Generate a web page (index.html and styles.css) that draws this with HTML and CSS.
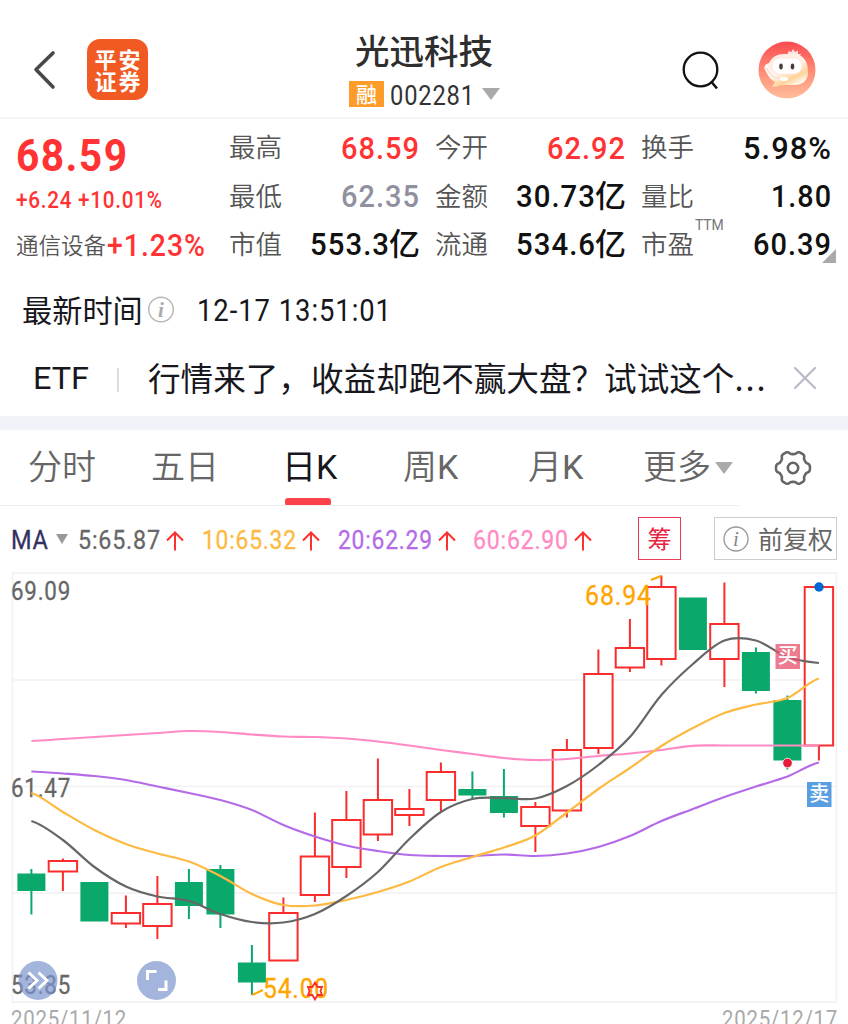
FILE: index.html
```html
<!DOCTYPE html>
<html lang="zh-CN">
<head>
<meta charset="utf-8">
<title>光迅科技 002281</title>
<link rel="stylesheet" href="styles.css">
</head>
<body>
<header class="header">
  <svg class="back" width="24" height="40" viewBox="0 0 24 40"><path d="M21 3L4 19.500L21 37" fill="none" stroke="#484848" stroke-width="3.600" stroke-linecap="round" stroke-linejoin="round"/></svg>
  <div class="logo"><span>平安</span><span>证券</span></div>
  <div class="title">
    <h1>光迅科技</h1>
    <div class="code"><span class="badge"><span>融</span></span><span class="num code-num" data-w="84">002281</span><i class="caret"></i></div>
  </div>
  <svg class="search" width="40" height="42" viewBox="0 0 40 42"><circle cx="18.500" cy="18.500" r="16.800" fill="none" stroke="#111" stroke-width="2.300"/><path d="M29.500 31L35 37.500" stroke="#111" stroke-width="2.600"/></svg>
  <svg class="avatar" width="58" height="58" viewBox="0 0 58 58">
    <defs>
      <linearGradient id="av" x1="0" y1="0" x2="0" y2="1"><stop offset="0" stop-color="#fa4a50"/><stop offset=".55" stop-color="#ff9078"/><stop offset="1" stop-color="#ffbd9c"/></linearGradient>
      <linearGradient id="face" x1="0" y1="0" x2=".7" y2="1"><stop offset="0" stop-color="#ffe9e2"/><stop offset=".55" stop-color="#fff3ea"/><stop offset=".8" stop-color="#ffd399"/><stop offset="1" stop-color="#fff"/></linearGradient>
    </defs>
    <circle cx="29" cy="29" r="28.500" fill="url(#av)"/>
    <path d="M29 14L31 10L33.500 11L35 8L37 11L40 9.500L40 13L43 13L41 17Z" fill="#ffe4dc"/>
    <path d="M26 13H35C45 13 50 20 50 31C50 40 44 44 36 44H27C22 44 19 46 14 46L17 41C11 38 9 32 7 29C5 25 8 23 11 22C14 16 19 13 26 13Z" fill="url(#face)"/>
    <rect x="14" y="17" width="30" height="16" rx="8" fill="#fff" stroke="#ffe3db" stroke-width=".8"/>
    <path d="M9 24C8 31 14 37 23 38" fill="none" stroke="#fff" stroke-width="2.200"/>
    <path d="M9 27C10 33 16 37 22 38" fill="none" stroke="#f8b3a1" stroke-width=".8"/>
    <ellipse cx="26" cy="38" rx="4" ry="2" fill="#fff"/>
    <ellipse cx="23" cy="25.500" rx="1.800" ry="2.900" fill="#4a3c35"/><ellipse cx="34.500" cy="25.500" rx="1.800" ry="2.900" fill="#4a3c35"/>
  </svg>
</header>

<section class="quote">
  <div class="price">
    <div class="last num" data-w="111">68.59</div>
    <div class="change num" data-w="146">+6.24 +10.01%</div>
    <div class="sector"><span>通信设备</span><b class="num" data-w="98">+1.23%</b></div>
  </div>
  <dl class="stats">
    <div><dt>最高</dt><dd class="num red" data-w="78">68.59</dd></div>
    <div><dt>今开</dt><dd class="num red" data-w="78">62.92</dd></div>
    <div><dt>换手</dt><dd class="num" data-w="88">5.98%</dd></div>
    <div><dt>最低</dt><dd class="num gray" data-w="78">62.35</dd></div>
    <div><dt>金额</dt><dd><span class="num" data-w="79">30.73</span><em>亿</em></dd></div>
    <div><dt>量比</dt><dd class="num" data-w="60">1.80</dd></div>
    <div><dt>市值</dt><dd><span class="num" data-w="79">553.3</span><em>亿</em></dd></div>
    <div><dt>流通</dt><dd><span class="num" data-w="79">534.6</span><em>亿</em></dd></div>
    <div><dt>市盈<sup>TTM</sup></dt><dd class="num" data-w="78">60.39</dd></div>
  </dl>
  <i class="corner"></i>
</section>

<section class="time">
  <span class="time-label">最新时间</span>
  <svg width="28" height="28" viewBox="0 0 28 28"><circle cx="14" cy="13.500" r="12.300" fill="none" stroke="#b5b5b5" stroke-width="1.400"/><text x="14" y="20.500" class="info">i</text></svg>
  <span class="num time-num" data-w="194">12-17 13:51:01</span>
</section>

<section class="promo">
  <span class="num etf" data-w="56">ETF</span><i class="bar"></i>
  <span class="promo-text">行情来了，收益却跑不赢大盘？试试这个<span class="dots">...</span></span>
  <svg width="24" height="24" viewBox="0 0 24 24"><path d="M2 2L22 22M22 2L2 22" stroke="#b9b9c8" stroke-width="2.200" stroke-linecap="round"/></svg>
</section>

<nav class="tabs">
  <span class="tab t1">分时</span><span class="tab t2">五日</span><span class="tab t3 on">日<b>K</b></span><span class="tab t4">周<b>K</b></span><span class="tab t5">月<b>K</b></span><span class="tab t6">更多<i class="caret"></i></span>
  <svg class="gear" width="38" height="38" viewBox="-19 -19 38 38"><path id="gear" fill="none" stroke="#666" stroke-width="2.600" stroke-linejoin="round"/><circle r="5.200" fill="none" stroke="#666" stroke-width="2.600"/></svg>
</nav>

<section class="ma">
  <b class="num ma-name" data-w="37">MA</b><i class="caret small"></i>
  <span class="num m5" data-w="82">5:65.87</span><svg class="up" width="18" height="20" viewBox="0 0 18 20"><path d="M9 19.500V2M1 9.500L9 1.500L17 9.500"/></svg>
  <span class="num m10" data-w="94">10:65.32</span><svg class="up" width="18" height="20" viewBox="0 0 18 20"><path d="M9 19.500V2M1 9.500L9 1.500L17 9.500"/></svg>
  <span class="num m20" data-w="94">20:62.29</span><svg class="up" width="18" height="20" viewBox="0 0 18 20"><path d="M9 19.500V2M1 9.500L9 1.500L17 9.500"/></svg>
  <span class="num m60" data-w="95">60:62.90</span><svg class="up" width="18" height="20" viewBox="0 0 18 20"><path d="M9 19.500V2M1 9.500L9 1.500L17 9.500"/></svg>
  <span class="chip">筹</span>
  <span class="adjust"><svg width="28" height="28" viewBox="0 0 28 28"><circle cx="14" cy="14" r="12" fill="none" stroke="#999" stroke-width="1.300"/><text x="14" y="20.500" class="info dark">i</text></svg>前复权</span>
</section>

<svg class="chart" width="848" height="452" viewBox="0 572 848 452">
  <path class="grid" d="M12.500 573H836.500V1002H12.500ZM12.500 680H836.500M12.500 786.500H836.500M12.500 893H836.500"/>
  <g class="axis num"><text x="11" y="600" textLength="60">69.09</text><text x="11" y="797" textLength="60">61.47</text><text x="11" y="994" textLength="60">53.85</text></g>
  <g id="candles"></g>
  <g class="peak num"><text x="585" y="604.500" textLength="67">68.94</text><text x="263" y="997.500" textLength="66">54.00</text></g>
  <path d="M651 580L661 576M252 995L263 990" stroke="#ffa500" stroke-width="2"/>
  <g id="lines"></g>
  <path d="M315 982.500L317.600 987L322 987L320.500 991L322 995L317.600 995L315 999.500L312.400 995L308 995L309.500 991L308 987L312.400 987Z" fill="none" stroke="#fa2d2d" stroke-width="1.800"/>
  <circle cx="819" cy="587" r="4.700" fill="#0066d6"/>
  <circle cx="787.500" cy="763" r="4.800" fill="#e51d3c" stroke="#fff" stroke-width=".8"/>
  <rect x="775.500" y="644" width="24.500" height="25" fill="#e8506b" fill-opacity=".75"/><text class="mark" x="787.700" y="663">买</text>
  <rect x="807" y="782" width="24.500" height="25" fill="#5a9ee2"/><text class="mark" x="819.200" y="801">卖</text>
  <g fill="#7d96cf" fill-opacity=".7"><circle cx="38" cy="980.500" r="19.500"/><circle cx="156.500" cy="980.500" r="19.500"/></g>
  <path d="M28.500 972.500L37 980.500L28.500 988.500M38.500 972.500L47 980.500L38.500 988.500M147.500 980V971.500H156.500M158 989.500H166V980.500" fill="none" stroke="#fff" stroke-width="3"/>
  <g class="dates num"><text x="11" y="1027" textLength="116">2025/11/12</text><text x="722" y="1027" textLength="116">2025/12/17</text></g>
</svg>
<script src="script.js"></script>
</body>
</html>
```
FILE: styles.css
```css
* { box-sizing: border-box; }
html, body { margin: 0; height: 1024px; overflow: hidden; }
body { width: 848px; background: #fff; color: #111; font-family: "Noto Sans CJK SC", sans-serif; font-weight: 350; }
i, em { font-style: normal; }
.num { font-family: Roboto, "Noto Sans CJK SC", sans-serif; font-weight: 500; white-space: nowrap; letter-spacing: .035em; }
[data-w] { display: inline-block; transform-origin: 0 50%; }
.caret { display: block; width: 0; border: 9px solid transparent; border-top: 12px solid #aaa; border-bottom: 0; }

.header { height: 119px; border-bottom: 2px solid #f6f6f6; display: flex; align-items: flex-start; padding-left: 32px; }
.back { margin-top: 50px; }
.logo { margin: 39px 0 0 31px; width: 61px; height: 61px; border-radius: 13px; background: #f15a22; color: #fff; font-weight: 700; font-size: 22px; line-height: 22px; padding-top: 8px; display: flex; flex-direction: column; align-items: center; }
.logo span { letter-spacing: 2px; margin-right: -2px; }
.title { width: 152px; margin-left: 201px; }
.title h1 { margin: 28px 0 0 6px; font-size: 34.500px; line-height: 42px; font-weight: 500; color: #2e2e2e; white-space: nowrap; }
.code { display: flex; align-items: center; margin-top: 11px; height: 26px; }
.badge { width: 35px; height: 26px; background: #ff9b28; color: #fff; font-size: 21px; line-height: 24px; text-align: center; font-weight: 500; }
.code-num { margin-left: 6px; font-size: 27px; font-weight: 400; color: #333; line-height: 26px; position: relative; top: 2px; }
.code .caret { margin-left: 8px; }
.search { margin: 51px 0 0 181px; }
.avatar { margin: 41px 0 0 36px; }

.quote { height: 151px; display: flex; position: relative; padding-left: 16px; }
.price { width: 213px; color: #ff3333; display: flex; flex-direction: column; align-items: flex-start; }
.last { margin-top: 11px; font-size: 45px; line-height: 52px; font-weight: 700; }
.change { margin-top: 4px; font-size: 23px; line-height: 30px; }
.sector { display: flex; align-items: center; height: 34px; margin-top: 13px; font-size: 22.500px; color: #555; line-height: 30px; }
.sector span { margin: -4px 1px 0 0; }
.sector .num { font-size: 31px; color: #ff3333; font-weight: 500; }
.stats { margin: 4px 0 0; display: grid; grid-template-columns: 190px 190px 190px; column-gap: 16px; grid-template-rows: 49px 48px 48px; }
.stats > div { display: flex; justify-content: space-between; align-items: center; }
.stats dt { font-size: 26.500px; line-height: 48px; color: #555; position: relative; margin-top: -3px; }
.stats sup { position: absolute; left: 54px; top: -9px; font: 400 14px/30px Roboto, sans-serif; letter-spacing: -.2px; color: #777; }
.stats dd { margin: 0; font-size: 32px; line-height: 48px; display: flex; }
.stats em { font-size: 31px; font-weight: 500; line-height: 44px; margin-right: -1px; }
.red { color: #ff3333; }
.gray { color: #9090a0; }
.corner { position: absolute; left: 822px; top: 130px; border: 7.500px solid #aaa; border-top-color: transparent; border-left-color: transparent; }

.time { height: 80px; display: flex; align-items: center; padding-left: 22px; color: #17171d; }
.time-label { font-size: 30.200px; font-weight: 400; margin-top: -3px; }
.time svg { margin-left: 4px; }
.info { font: italic 700 21px "Liberation Serif", serif; fill: #aaa; text-anchor: middle; }
.info.dark { fill: #888; font-weight: 400; }
.time-num { margin-left: 22px; font-size: 31px; font-weight: 400; }
.promo { height: 66px; display: flex; align-items: center; padding: 0 0 10px 33px; color: #17171d; }
.etf { font-size: 32px; font-weight: 400; letter-spacing: 0; }
.bar { width: 2px; height: 24px; margin: 4px 0 0 28px; background: #ddd; }
.promo-text { margin: -4px 0 0 29px; font-size: 32.600px; font-weight: 400; white-space: nowrap; width: 620px; }
.dots { letter-spacing: 2px; }
.promo svg { margin-left: 25px; margin-top: -1px; }

.tabs { height: 90px; border-top: 14px solid #f2f3f8; display: flex; align-items: flex-start; color: #666; position: relative; }
.tabs::after { content: ""; position: absolute; left: 0; bottom: 0; width: 739px; height: 1px; background: #eee; }
.tab { font-size: 34px; line-height: 70px; height: 76px; display: flex; font-weight: 350; }
.tab b { font: 400 34px/74px Roboto, sans-serif; }
.t1 { margin-left: 28px; width: 123px; } .t2 { width: 131px; } .t3 { width: 121px; } .t4 { width: 125px; } .t5 { width: 115px; } .t6 { width: 131px; }
.tab .caret { margin: 32px 0 0 4px; }
.on { color: #17171d; position: relative; font-weight: 400; }
.on::after { content: ""; position: absolute; left: 3px; bottom: 0; width: 46px; height: 8px; border-radius: 3px; background: #fa4248; }
.gear { margin-top: 19px; }

.ma { height: 66px; display: flex; align-items: center; padding: 0 0 0 11px; font-size: 26px; }
.ma-name { color: #34305f; font-weight: 500; }
.ma .num { position: relative; top: 1px; font-weight: 400; -webkit-text-stroke: .3px; }
.small { margin: 0 0 0 8px; border: 6.500px solid transparent; border-top: 10px solid #999; border-bottom: 0; }
.m5 { margin-left: 10px; color: #666; }
.m10 { margin-left: 18px; color: #fdb940; }
.m20 { margin-left: 18px; color: #b46be8; }
.m60 { margin-left: 17px; color: #ff8ac4; }
.up { margin: 4px 0 0 6px; fill: none; stroke: #ff3030; stroke-width: 2; flex: none; }
.chip { margin: -1px 0 0 46px; width: 43px; height: 43px; border: 1px solid #ea3a57; color: #e8213f; font-size: 24px; line-height: 40px; text-align: center; font-weight: 400; flex: none; }
.adjust { margin: -1px 0 0 33px; width: 123px; height: 43px; border: 1px solid #ccc; display: flex; align-items: center; font-size: 25px; line-height: 39px; font-weight: 400; color: #666; padding-left: 7px; white-space: nowrap; flex: none; }
.adjust svg { margin-right: 8px; flex: none; }

.chart { display: block; }
.grid { fill: none; stroke: #f1f1f3; stroke-width: 1.600; }
.chart .num { font-weight: 400; }
.axis { font-size: 25px; fill: #666; stroke: #666; stroke-width: .3px; }
.peak { font-size: 27px; fill: #ffa500; stroke: #ffa500; stroke-width: .3px; }
.dates { font-size: 24px; fill: #aaa; }
.mark { font-size: 20px; font-weight: 500; fill: #fff; text-anchor: middle; }
.rise { fill: #fff; stroke: #fa2d2d; stroke-width: 2; }
.fall { fill: #0aa86b; stroke: #0aa86b; stroke-width: 2; }
.avg { fill: none; stroke-width: 2.200; }
```
FILE: script.js
```js
// Narrow, spaced numerals: scale each run horizontally to its column width,
// leaving the trailing letter-space outside the measured width.
document.querySelectorAll('[data-w]').forEach(function (el) {
  var natural = el.getBoundingClientRect().width, w = +el.dataset.w;
  var trail = parseFloat(getComputedStyle(el).letterSpacing) || 0;
  el.style.transform = 'scaleX(' + w / (natural - trail) + ')';
  el.style.marginRight = (w - natural) + 'px';
});
document.querySelectorAll('text[textLength]').forEach(function (t) {
  t.setAttribute('lengthAdjust', 'spacingAndGlyphs');
});

// Settings gear outline with six soft teeth.
var g = [];
for (var a = 0; a < 360; a += 3) {
  var r = 15.4 + 1.6 * Math.tanh(2 * (Math.cos(a * Math.PI / 30) + 0.15)), q = a * Math.PI / 180;
  g.push((r * Math.cos(q)).toFixed(2) + ' ' + (r * Math.sin(q)).toFixed(2));
}
document.getElementById('gear').setAttribute('d', 'M' + g.join('L') + 'Z');

// type, high, body top, body bottom, low
var candles = [
  ['f',869,873.5,891,914.5],['r',858.5,860,872.5,891],['f',882,882,921.5,921.5],['r',895.5,912,924.5,928],
  ['r',876,903,927,939],['f',869,882,906,919],['f',865,869,914.5,928],['f',945,962.5,982.5,995],
  ['r',897.5,912,961.5,961.5],['r',812.5,855.5,896,902],['r',791,819,868,878],['r',758.5,799,835.5,841],
  ['r',789,808,816,826],['r',762.5,771,801,812],['f',771.5,789,795.5,799],['f',769,796,813,817.5],
  ['r',802,806,827,852],['r',739,749,811.5,817.5],['r',649.5,673,749,754],['r',619,647,668.5,672],
  ['r',575.5,586,660,665.5],['f',597.5,597.5,650,650],['r',582.5,623,660,687],['f',647.5,652,691,693.5],
  ['f',695.5,700,760.5,769.5],['r',586,586,746.5,760.5]
];
var X = function (i) { return 31.4 + 31.5 * i; };
document.getElementById('candles').innerHTML = candles.map(function (c, i) {
  var x = X(i), h = c[0] === 'r' ? 14.2 : 13;
  return '<path class="' + (c[0] === 'r' ? 'rise' : 'fall') + '" d="M' + x + ' ' + c[1] + 'V' + c[2] + 'M' + x + ' ' + c[3] + 'V' + c[4] +
    'M' + (x - h) + ' ' + (c[2] + 1) + 'H' + (x + h) + 'V' + (c[3] - 1) + 'H' + (x - h) + 'Z"/>';
}).join('');

var averages = {
  '#ff8ac4': [741,739,737,735,733,731,732,734.5,736.5,737,738.5,741.5,745.5,750,754,758,760,759,756,753.5,750,745.8,745.5,745.5,745.5,745.5],
  '#b46be8': [771.5,773.5,776,780,786.5,793,800,810,825,836.5,845.5,851,855,856,856,854.5,856,853.5,847,836,821,809,797,786.5,776.5,762.5],
  '#fdb940': [793,812,830,844,853.5,861.5,876,894,905,905.5,900,892,881.5,867,857,847.5,835.5,812.5,789,768,746,728,713,704.5,698,678.5],
  '#666': [821,840,867,886.5,896.5,901,914,922,922.5,914,896,872,839,812,799,798,798.5,786,765,737,695,664,640.5,640.5,657,663]
};
document.getElementById('lines').innerHTML = Object.keys(averages).map(function (k) {
  var p = averages[k], n = p.length, d = 'M' + X(0) + ' ' + p[0];
  for (var i = 0; i < n - 1; i++) {
    var y0 = p[Math.max(0, i - 1)], y1 = p[i], y2 = p[i + 1], y3 = p[Math.min(n - 1, i + 2)];
    d += 'C' + (X(i) + 10.5) + ' ' + (y1 + (y2 - y0) / 6) + ' ' + (X(i + 1) - 10.5) + ' ' + (y2 - (y3 - y1) / 6) + ' ' + X(i + 1) + ' ' + y2;
  }
  return '<path class="avg" stroke="' + k + '" d="' + d + '"/>';
}).join('');
```
